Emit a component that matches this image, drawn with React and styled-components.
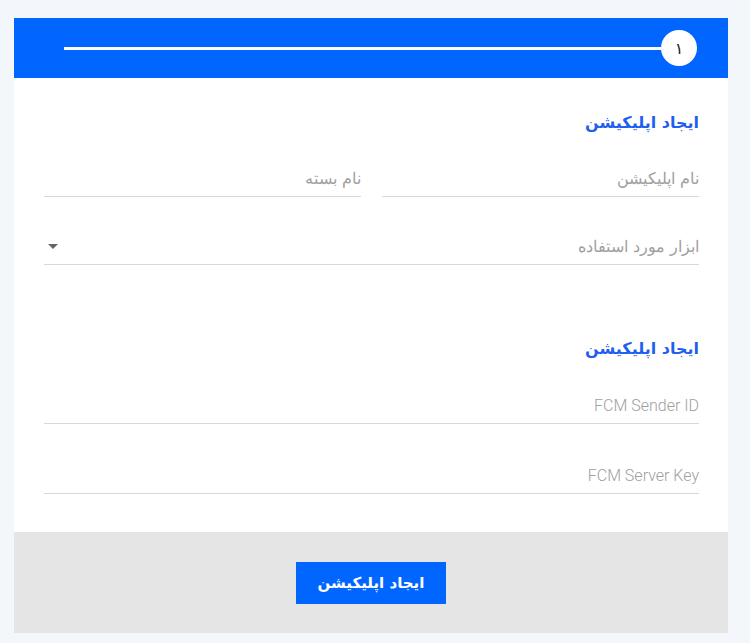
import React from "react";
import styled, { createGlobalStyle } from "styled-components";

const GlobalStyle = createGlobalStyle`
  body {
    margin: 0;
    background: #f3f6fa;
    font-family: Roboto, "DejaVu Sans", sans-serif;
  }
`;

const Page = styled.div`
  padding: 18px 22px 10px 14px;
`;

const Card = styled.div`
  direction: rtl;
  background: #ffffff;
`;

const Stepper = styled.div`
  display: flex;
  align-items: center;
  height: 60px;
  padding: 0 31px 0 50px;
  background: #0066ff;
`;

const StepCircle = styled.div`
  width: 36px;
  height: 36px;
  border-radius: 50%;
  background: #ffffff;
  color: #222;
  display: flex;
  align-items: center;
  justify-content: center;
  font-family: "DejaVu Sans", sans-serif;
  font-size: 16px;
  flex-shrink: 0;
`;

const StepLine = styled.div`
  flex: 1;
  height: 3px;
  background: #ffffff;
`;

const Body = styled.div`
  padding: 33px 29px 38px 30px;
`;

const Title = styled.h3`
  margin: ${(p) => (p.$top ? `${p.$top}px` : "0")} 0 0 0;
  font-family: "DejaVu Sans", sans-serif;
  font-size: 16px;
  font-weight: 600;
  line-height: 24px;
  color: #1f5ff0;
`;

const Row = styled.div`
  display: flex;
  gap: 21px;
  margin-top: ${(p) => p.$top}px;
`;

const Field = styled.div`
  flex: 1;
  height: 34px;
  display: flex;
  align-items: center;
  justify-content: space-between;
  border-bottom: 1px solid #d8d8d8;
  box-sizing: border-box;
  padding: 0 0 2px 0;
  font-size: ${(p) => (p.$latin ? "16px" : "15.5px")};
  font-weight: 300;
  color: #a0a0a0;
  font-family: ${(p) =>
    p.$latin ? 'Roboto, "DejaVu Sans", sans-serif' : '"DejaVu Sans", sans-serif'};
`;

const Arrow = styled.span`
  width: 0;
  height: 0;
  margin-left: 4px;
  border-left: 5px solid transparent;
  border-right: 5px solid transparent;
  border-top: 5px solid #666;
`;

const Footer = styled.div`
  display: flex;
  justify-content: center;
  padding: 30px 0 29px;
  background: #e5e5e5;
`;

const Button = styled.button`
  width: 150px;
  height: 42px;
  border: none;
  background: #0066ff;
  color: #ffffff;
  font-family: "DejaVu Sans", sans-serif;
  font-size: 15px;
  font-weight: 700;
  cursor: pointer;
`;

export default function App() {
  return (
    <>
      <GlobalStyle />
      <Page>
        <Card>
          <Stepper>
            <StepCircle>۱</StepCircle>
            <StepLine />
          </Stepper>
          <Body>
            <Title>ایجاد اپلیکیشن</Title>
            <Row $top={28}>
              <Field>نام اپلیکیشن</Field>
              <Field>نام بسته</Field>
            </Row>
            <Row $top={34}>
              <Field>
                ابزار مورد استفاده
                <Arrow />
              </Field>
            </Row>
            <Title $top={72}>ایجاد اپلیکیشن</Title>
            <Row $top={29}>
              <Field $latin>FCM Sender ID</Field>
            </Row>
            <Row $top={36}>
              <Field $latin>FCM Server Key</Field>
            </Row>
          </Body>
          <Footer>
            <Button>ایجاد اپلیکیشن</Button>
          </Footer>
        </Card>
      </Page>
    </>
  );
}
